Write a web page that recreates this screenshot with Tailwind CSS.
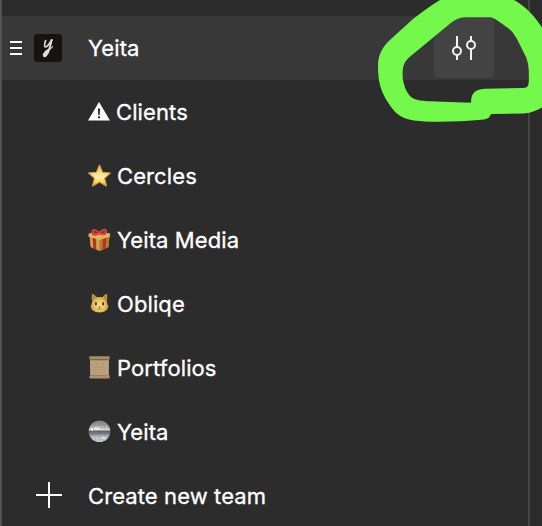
<!DOCTYPE html>
<html lang="en">
<head>
<meta charset="utf-8">
<title>Teams</title>
<script src="https://cdn.jsdelivr.net/npm/@tailwindcss/browser@4"></script>
</head>
<body class="bg-[#2c2c2c] overflow-hidden">
<div class="relative w-[542px] h-[526px] overflow-hidden flex bg-[#2c2c2c] text-white text-[22px] leading-none tracking-[0.1px] [-webkit-text-stroke:0.3px_#fff] font-['Inter',sans-serif]">
  <div class="w-[2px] bg-[#535353] shrink-0"></div>
  <nav class="w-[526px] shrink-0 pt-4">
    <div class="h-16 bg-[#383838] flex items-center">
      <svg class="ml-2 w-3 h-4 shrink-0" viewBox="0 0 12 16" fill="#fff"><path d="M0 1h12v2H0zM0 7h12v2H0zM0 13h12v2H0z"/></svg>
      <div class="ml-3 w-7 h-7 rounded-[3px] bg-[#15140e] shrink-0">
        <svg class="w-7 h-7" viewBox="0 0 28 28" fill="none" stroke="#e3dfcf" stroke-linecap="round" stroke-linejoin="round"><path stroke-width="1.7" d="M11.6 6.5Q9.800 12.500 11.300 13Q13.500 13.200 17.700 6"/><path stroke-width="1.9" d="M17.700 6Q16.200 13 14 18.500"/><path stroke-width="2.300" d="M13.800 18.200Q11.500 22.800 10.300 22Q9.400 21 10.800 19.200Q12 17.200 14.500 16"/><path stroke-width="1.100" d="M14.500 16Q17 15 18.600 12.500"/></svg>
      </div>
      <span class="ml-[26px]">Yeita</span>
      <div class="ml-auto mr-[34px] mt-[-2px] w-[60px] h-[62px] rounded-[4px] bg-[#434343] flex items-center justify-center">
        <svg class="w-6 h-6 mt-[1px]" viewBox="0 0 24 24" fill="none" stroke="#f2f2f2" stroke-width="2"><path d="M5 0v11M5 19v5M19 0v5M19 13v11"/><circle cx="5" cy="15" r="4"/><circle cx="19" cy="9" r="4"/></svg>
      </div>
    </div>
    <div class="h-16 flex items-center pl-[86px]">
      <svg class="w-[22px] h-[22px] mr-[6px]" viewBox="0 0 22 22"><path fill="#fff" d="M11 1 22 19.500H0Z"/><path fill="#2c2c2c" d="M9.900 7.500h2.200L11.700 14h-1.400zM10 15.200h2v2h-2z"/></svg>
      <span>Clients</span>
    </div>
    <div class="h-16 flex items-center pl-[86px]">
      <svg class="w-6 h-6 mr-[5px]" viewBox="0 0 24 24"><defs><linearGradient id="st" x1="0" y1="0" x2="0" y2="1"><stop stop-color="#f0c060"/><stop offset=".35" stop-color="#f9dc90"/><stop offset=".6" stop-color="#fff0a8"/><stop offset=".8" stop-color="#ffd565"/><stop offset="1" stop-color="#e79a38"/></linearGradient></defs><path fill="url(#st)" stroke="#dda349" stroke-width="1.200" stroke-linejoin="round" d="M11.500 1.200 14.600 8.400 22.300 9 16.500 14.200 18.400 22 11.500 17.900 4.600 22 6.500 14.200.7 9 8.400 8.400Z"/></svg>
      <span>Cercles</span>
    </div>
    <div class="h-16 flex items-center pl-[86px]">
      <svg class="w-6 h-6 mr-[5px]" viewBox="0 0 24 24"><path fill="#d2a343" d="M1.500 6 11 4l10.500 2-1 13-9 4-9-4Z"/><path fill="#b17c2c" d="M11.500 10 21.500 7l-1 12-9 4Z"/><path fill="#dfb458" d="M.6 5.500 11 3.500l11.100 2v3.200L11.600 12 .6 8.700Z"/><path fill="#b92e30" d="m4.500 9.800 3.500 1.100.3 10.600-3-1.300ZM14.800 10.900l3.500-1.200-.6 10.600-3 1.300Z"/><path fill="#d04440" d="M10.800 6.500C6 9.500 2.500 7 3.500 3.200 4.400-.3 8 .6 11 4c3-3.400 7.200-4.600 8-1.200.7 3.600-3.100 5.800-7 3.600Z"/><path fill="#98262a" d="M10 5Q6.500 1.800 5.500 3.200 5.300 5.300 10 5M12.500 5Q16 1.800 17 3.200 16.800 5.300 12.500 5"/></svg>
      <span>Yeita Media</span>
    </div>
    <div class="h-16 flex items-center pl-[86px]">
      <svg class="w-6 h-6 mr-[5px]" viewBox="0 0 24 24"><defs><radialGradient id="ct" cy=".62"><stop stop-color="#f8df91"/><stop offset=".65" stop-color="#e7c15c"/><stop offset="1" stop-color="#bd933f"/></radialGradient></defs><path fill="url(#ct)" d="M4 1.700Q7.200 2.500 8.400 5h6.200Q15.800 2.500 19 1.700q.8 4-.3 7.300.6 3.200 1.700 5.300-.5 5.800-8.900 6.300Q3.100 20.100 2.600 14.300 3.700 12 4.300 9 3.200 5.700 4 1.700Z"/><path fill="#b18445" d="M5 3.700 7.200 5.500 5.400 7.400ZM18 3.700 15.800 5.500l1.800 1.900Z"/><ellipse cx="7.900" cy="11.800" rx="1" ry="1.800" fill="#45331f"/><ellipse cx="15.100" cy="11.800" rx="1" ry="1.800" fill="#45331f"/><path fill="#8e553c" d="M10.400 14.500h2.200l-1.100 1.400Z"/><path fill="none" stroke="#8e6330" stroke-width=".7" d="M11.500 15.500v1.100q-1 1-2.200.3m2.200-.3q1 1 2.200.3"/></svg>
      <span>Obliqe</span>
    </div>
    <div class="h-16 flex items-center pl-[86px]">
      <svg class="w-6 h-6 mr-[5px]" viewBox="0 0 24 24"><path fill="#bda07c" d="M2 2.500h19L20.800 20H2.200Z"/><path fill="none" stroke="#a98e6c" stroke-width=".5" d="M5 8h6m2 0h5M5 11h12M4 14h7m2 0h5M5 17h12"/><rect x="1" y=".3" width="21" height="3.200" rx="1" fill="#a68c6b"/><path fill="#70573d" d="M2.200 3.300h18.600v1H2.200zM.9 1h1v2.500h-1zM21.100 1h1v2.500h-1z"/><rect x="1.500" y="19.500" width="20.500" height="3" rx="1" fill="#b1946f"/><path fill="#80664a" d="M2.500 19.200h18v.6h-18zM21 19.500h1v2.500h-1z"/></svg>
      <span>Portfolios</span>
    </div>
    <div class="h-16 flex items-center pl-[86px]">
      <svg class="w-6 h-6 mr-[5px]" viewBox="0 0 24 24"><defs><linearGradient id="db" x1="0" y1="0" x2="0" y2="1"><stop stop-color="#77777b"/><stop offset=".25" stop-color="#a5a6aa"/><stop offset=".42" stop-color="#dedede"/><stop offset=".5" stop-color="#606166"/><stop offset=".64" stop-color="#898b90"/><stop offset=".75" stop-color="#c1c3c8"/><stop offset="1" stop-color="#d0d1d6"/></linearGradient></defs><circle cx="11.500" cy="11.300" r="10.800" fill="url(#db)"/><path fill="none" stroke="#67686e" stroke-opacity=".3" stroke-width=".5" d="M3 5h17M1 8h21M1 14h21M2 17h19M6 20h11M11.500 1v21M8 1q-4 10 0 20M15 1q4 10 0 20M4 4q-4 7 0 14M19 4q4 7 0 14"/><path fill="#fff" fill-opacity=".5" d="M6 7h6v3H6zM3 8h2v3H3zM14 17h3v2h-3z"/></svg>
      <span>Yeita</span>
    </div>
    <div class="h-16 flex items-center">
      <svg class="ml-[34px] mr-[26px] mt-[-2px] w-[26px] h-[26px]" viewBox="0 0 26 26" fill="#fff"><path d="M12 0h2v12h12v2H14v12h-2V14H0v-2h12z"/></svg>
      <span>Create new team</span>
    </div>
  </nav>
  <div class="w-[2px] bg-[#454545] shrink-0"></div>
  <svg class="absolute inset-0 w-[542px] h-[526px] pointer-events-none" viewBox="0 0 542 526"><path fill="#73f84b" fill-rule="evenodd" d="M440 0C430 6 422 12 413 19L391 39C382 47 378 55 378 66C378 80 380 91 389 104C396 115 403 119 414 120.500C430 122.500 456 122 484 119.500C488 119 490 117 491 114L524 113.500C532 113 538 110 543 107V29C534 15 525 6 514 0ZM467 17.300H491C496 19 502 24 508 28C514 33 516 37 519 43L526 57C529 65 529 71 529 79C529 85 528 88 523 88L486 88.700C475 89 471 93 471 102.700L436 101.500C423 101 415 101 410 96C404 89 402 78 402.700 72C403 63 406 60 412 55L452 22C457 18.500 461 17 467 17.300Z"/></svg>
</div>
</body>
</html>
